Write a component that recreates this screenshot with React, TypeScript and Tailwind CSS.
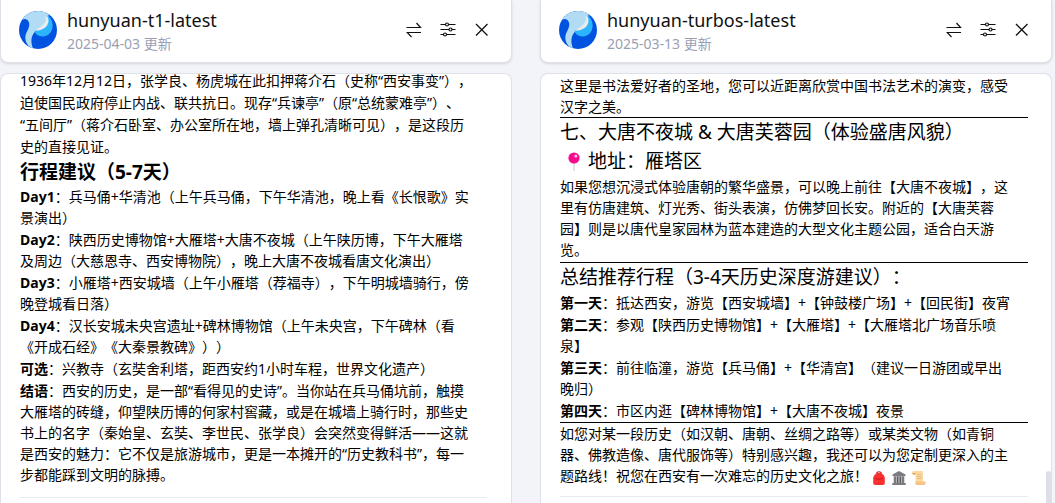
import type { ReactNode } from "react";

const Rule = ({ light = false }: { light?: boolean }) => (
  <hr className={light ? "border-t border-[#ebebef]" : "border-t border-black"} />
);

const Logo = () => (
  <svg viewBox="0 0 38 38" className="mt-1 size-[38px] shrink-0" aria-hidden="true">
    <circle cx="19" cy="19" r="19" fill="#0053e0" />
    <path d="M2.6 9.5A19 19 0 0 1 29.500 3.200C30 10 26 15 19 18.500C13 22 10.500 29 14 37.300C7.500 35.500 4.500 28 7.500 21.500C9.500 18 11 14.500 9.800 11C8.500 7.800 5 7.200 2.600 9.500z" fill="#b2dcf3" />
    <path d="M28.500 4C34.500 9 35 17 31.500 21.500C27.500 27 17 27 15.500 19.500C24 18 30 13 28.500 4z" fill="#2bb5ff" />
    <path d="M26.500 5.500C28 10.500 25 14.500 15.800 19.500C22 20 30 16.500 29.500 9C29.400 6.500 28 5 26.500 5.500z" fill="#e9ecef" />
  </svg>
);

const SwapIcon = () => (
  <svg viewBox="0 0 16 16" className="size-4" fill="none" stroke="#111" strokeWidth="1.2" aria-hidden="true">
    <path d="M.5 5.5h14L10.500 1M15 10.500H1.200L5.500 15" />
  </svg>
);

const SlidersIcon = () => (
  <svg viewBox="0 0 16 16" className="size-4" fill="none" stroke="#111" strokeWidth="1.2" aria-hidden="true">
    <path d="M.5 2.500h5M8.500 2.500h7M.5 7.500h8.500M12 7.500h3.500M.5 12.500h3M6.500 12.500h9" />
    <circle cx="7" cy="2.500" r="1.500" />
    <circle cx="10.500" cy="7.500" r="1.500" />
    <circle cx="5" cy="12.500" r="1.500" />
  </svg>
);

const CloseIcon = () => (
  <svg viewBox="0 0 16 16" className="size-4" fill="none" stroke="#111" strokeWidth="1.3" aria-hidden="true">
    <path d="M2 2l11.500 11.500M13.500 2L2 13.500" />
  </svg>
);

const Pin = () => (
  <svg viewBox="0 0 12 20" className="h-5 w-3" role="img" aria-label="📍">
    <path d="M5.500 11h1v8h-1z" fill="#c4c8cc" />
    <circle cx="6" cy="6" r="5.600" fill="#f70a8d" />
    <circle cx="7.800" cy="4" r="1.500" fill="#ffc4e4" />
  </svg>
);

const Backpack = () => (
  <svg viewBox="0 0 14 14" className="size-[14px]" role="img" aria-label="🎒">
    <path d="M5 3V1.500q2-1.500 4 0V3" fill="none" stroke="#c41a24" strokeWidth="1.200" />
    <path d="M1.200 12V7.500C1.200 4 4 2 7 2s5.800 2 5.800 5.500V12q0 2-2 2H3.200q-2 0-2-2z" fill="#f8312f" />
    <path d="M3 7.500q4 1.500 8 0" fill="none" stroke="#ca0b2a" strokeWidth=".8" />
  </svg>
);

const Museum = () => (
  <svg viewBox="0 0 14 14" className="size-[14px]" role="img" aria-label="🏛️">
    <path d="M7 0l6.500 3.500V5H.5V3.500z" fill="#7b7b80" />
    <path d="M1.500 5h11v7h-11z" fill="#b4b4b8" />
    <path d="M3 5.500V12M5.700 5.500V12M8.300 5.500V12M11 5.500V12" stroke="#55555a" strokeWidth="1.200" />
    <path d="M.3 12h13.400v2H.3z" fill="#7b7b80" />
  </svg>
);

const Scroll = () => (
  <svg viewBox="0 0 14 14" className="size-[14px]" role="img" aria-label="📜">
    <path d="M2 0h9v11.500H3.500V4H2a2 2 0 0 1 0-4z" fill="#fcd9a0" />
    <path d="M.3 2a1.700 1.700 0 0 0 3.400 0z" fill="#e5a65c" />
    <path d="M4 10.500h9.500q.5 3.500-2 3.500H4q-1.500-1.500 0-3.500z" fill="#f3c486" />
    <path d="M5 3.500h4.500M5 5.500h4.500M5 7.500h4.500" stroke="#e0b070" strokeWidth=".7" />
  </svg>
);

const Header = ({ name, date }: { name: string; date: string }) => (
  <header className="flex items-start rounded-b-lg border border-t-0 border-[#dfe1e8] bg-white pt-[7px] pr-[21px] pb-[7px] pl-[18px] shadow-sm">
    <Logo />
    <div className="ml-2.5 min-w-0 flex-1">
      <h2 className="text-[18px] leading-[26px] text-[#111]">{name}</h2>
      <p className="text-[14px] leading-[22px] text-[#9a9fb3]">{date} 更新</p>
    </div>
    <div className="mt-1 flex h-[38px] items-center gap-[18px]">
      <button type="button" aria-label="切换模型"><SwapIcon /></button>
      <button type="button" aria-label="参数设置"><SlidersIcon /></button>
      <button type="button" aria-label="关闭"><CloseIcon /></button>
    </div>
  </header>
);

const Panel = ({ name, date, children }: { name: string; date: string; children: ReactNode }) => (
  <section className="flex min-h-0 min-w-0 flex-col gap-2.5">
    <Header name={name} date={date} />
    <div className="min-h-0 flex-1 rounded-t-lg border border-b-0 border-[#dfe1e8] bg-white">
      {children}
    </div>
  </section>
);

const Item = ({ label, children }: { label: string; children: ReactNode }) => (
  <li><strong>{label}</strong>：{children}</li>
);

export default function App() {
  return (
    <main className="grid h-screen grid-cols-2 grid-rows-1 gap-7 overflow-hidden bg-[#f3f4f9] pr-[3px] font-['Noto_Sans','Noto_Sans_CJK_SC',sans-serif] text-[14px] text-black [text-spacing-trim:space-all]">
      <Panel name="hunyuan-t1-latest" date="2025-04-03">
        <article className="-mt-1 pr-6 pl-[19px] whitespace-nowrap">
          <p className="leading-[22px]">
            1936年12月12日，张学良、杨虎城在此扣押蒋介石（史称“西安事变”），<br />
            迫使国民政府停止内战、联共抗日。现存“兵谏亭”（原“总统蒙难亭”）、<br />
            “五间厅”（蒋介石卧室、办公室所在地，墙上弹孔清晰可见），是这段历<br />
            史的直接见证。
          </p>
          <h3 className="text-[19px] leading-[28px] font-bold">行程建议（5-7天）</h3>
          <ul className="flex flex-col gap-px leading-[21px]">
            <Item label="Day1">兵马俑+华清池（上午兵马俑，下午华清池，晚上看《长恨歌》实<br />景演出）</Item>
            <Item label="Day2">陕西历史博物馆+大雁塔+大唐不夜城（上午陕历博，下午大雁塔<br />及周边（大慈恩寺、西安博物院），晚上大唐不夜城看唐文化演出）</Item>
            <Item label="Day3">小雁塔+西安城墙（上午小雁塔（荐福寺），下午明城墙骑行，傍<br />晚登城看日落）</Item>
            <Item label="Day4">汉长安城未央宫遗址+碑林博物馆（上午未央宫，下午碑林（看<br />《开成石经》《大秦景教碑》））</Item>
            <Item label="可选">兴教寺（玄奘舍利塔，距西安约1小时车程，世界文化遗产）</Item>
            <Item label="结语">
              西安的历史，是一部“看得见的史诗”。当你站在兵马俑坑前，触摸<br />
              大雁塔的砖缝，仰望陕历博的何家村窖藏，或是在城墙上骑行时，那些史<br />
              书上的名字（秦始皇、玄奘、李世民、张学良）会突然变得鲜活——这就<br />
              是西安的魅力：它不仅是旅游城市，更是一本摊开的“历史教科书”，每一<br />
              步都能踩到文明的脉搏。
            </Item>
          </ul>
          <div className="pt-3"><Rule light /></div>
        </article>
      </Panel>
      <Panel name="hunyuan-turbos-latest" date="2025-03-13">
        <div className="relative h-full">
          <article className="pt-px pr-[23px] pl-[19px] whitespace-nowrap">
            <p className="leading-[21px]">
              这里是书法爱好者的圣地，您可以近距离欣赏中国书法艺术的演变，感受<br />
              汉字之美。
            </p>
            <Rule />
            <h3 className="text-[19px] leading-[29px]">七、大唐不夜城 &amp; 大唐芙蓉园（体验盛唐风貌）</h3>
            <h3 className="flex items-center gap-2 pl-2 text-[19px] leading-[29px]"><Pin />地址：雁塔区</h3>
            <p className="pb-0.5 leading-[21px]">
              如果您想沉浸式体验唐朝的繁华盛景，可以晚上前往【大唐不夜城】，这<br />
              里有仿唐建筑、灯光秀、街头表演，仿佛梦回长安。附近的【大唐芙蓉<br />
              园】则是以唐代皇家园林为蓝本建造的大型文化主题公园，适合白天游<br />
              览。
            </p>
            <Rule />
            <h3 className="text-[19px] leading-[28px]">总结推荐行程（3-4天历史深度游建议）：</h3>
            <ul className="flex flex-col gap-px py-px leading-[21px]">
              <Item label="第一天">抵达西安，游览【西安城墙】+【钟鼓楼广场】+【回民街】夜宵</Item>
              <Item label="第二天">参观【陕西历史博物馆】+【大雁塔】+【大雁塔北广场音乐喷<br />泉】</Item>
              <Item label="第三天">前往临潼，游览【兵马俑】+【华清宫】（建议一日游团或早出<br />晚归）</Item>
              <Item label="第四天">市区内逛【碑林博物馆】+【大唐不夜城】夜景</Item>
            </ul>
            <Rule />
            <p className="leading-[21px]">
              如您对某一段历史（如汉朝、唐朝、丝绸之路等）或某类文物（如青铜<br />
              器、佛教造像、唐代服饰等）特别感兴趣，我还可以为您定制更深入的主<br />
              题路线！祝您在西安有一次难忘的历史文化之旅！
              <span className="ml-1 inline-flex gap-1.5 align-text-bottom"><Backpack /><Museum /><Scroll /></span>
            </p>
            <div className="pt-2.5"><Rule light /></div>
          </article>
          <div className="absolute right-0 bottom-0 h-8 w-[5px] rounded-t-full bg-[#dddfe6]" />
        </div>
      </Panel>
    </main>
  );
}
